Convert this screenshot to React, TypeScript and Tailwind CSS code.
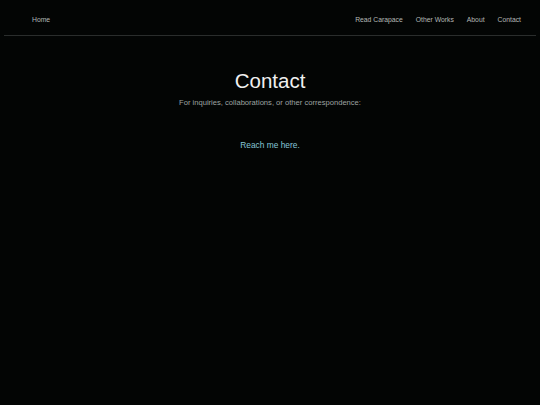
export default function App() {
  return (
    <div className="min-h-[405px] w-full bg-[#030504] font-['Liberation_Sans',Arial,sans-serif]">
      <nav className="mx-1 flex h-[36px] items-start justify-between border-b border-[#2a2d2c] pl-[28px] pr-[15px] pt-[15px]">
        <a className="text-[6.8px] text-[#b4b8b6]">Home</a>
        <div className="flex gap-[13px] text-[6.8px] text-[#b4b8b6]">
          <a>Read Carapace</a>
          <a>Other Works</a>
          <a>About</a>
          <a>Contact</a>
        </div>
      </nav>
      <main className="flex flex-col items-center pt-[33px]">
        <h1 className="text-[20.5px] leading-[24px] text-[#f0f0f0]">Contact</h1>
        <p className="mt-[4px] text-[7.6px] text-[#9ea3a1]">For inquiries, collaborations, or other correspondence:</p>
        <a className="mt-[31px] text-[8.4px] text-[#86c5d8]">Reach me here.</a>
      </main>
    </div>
  );
}
